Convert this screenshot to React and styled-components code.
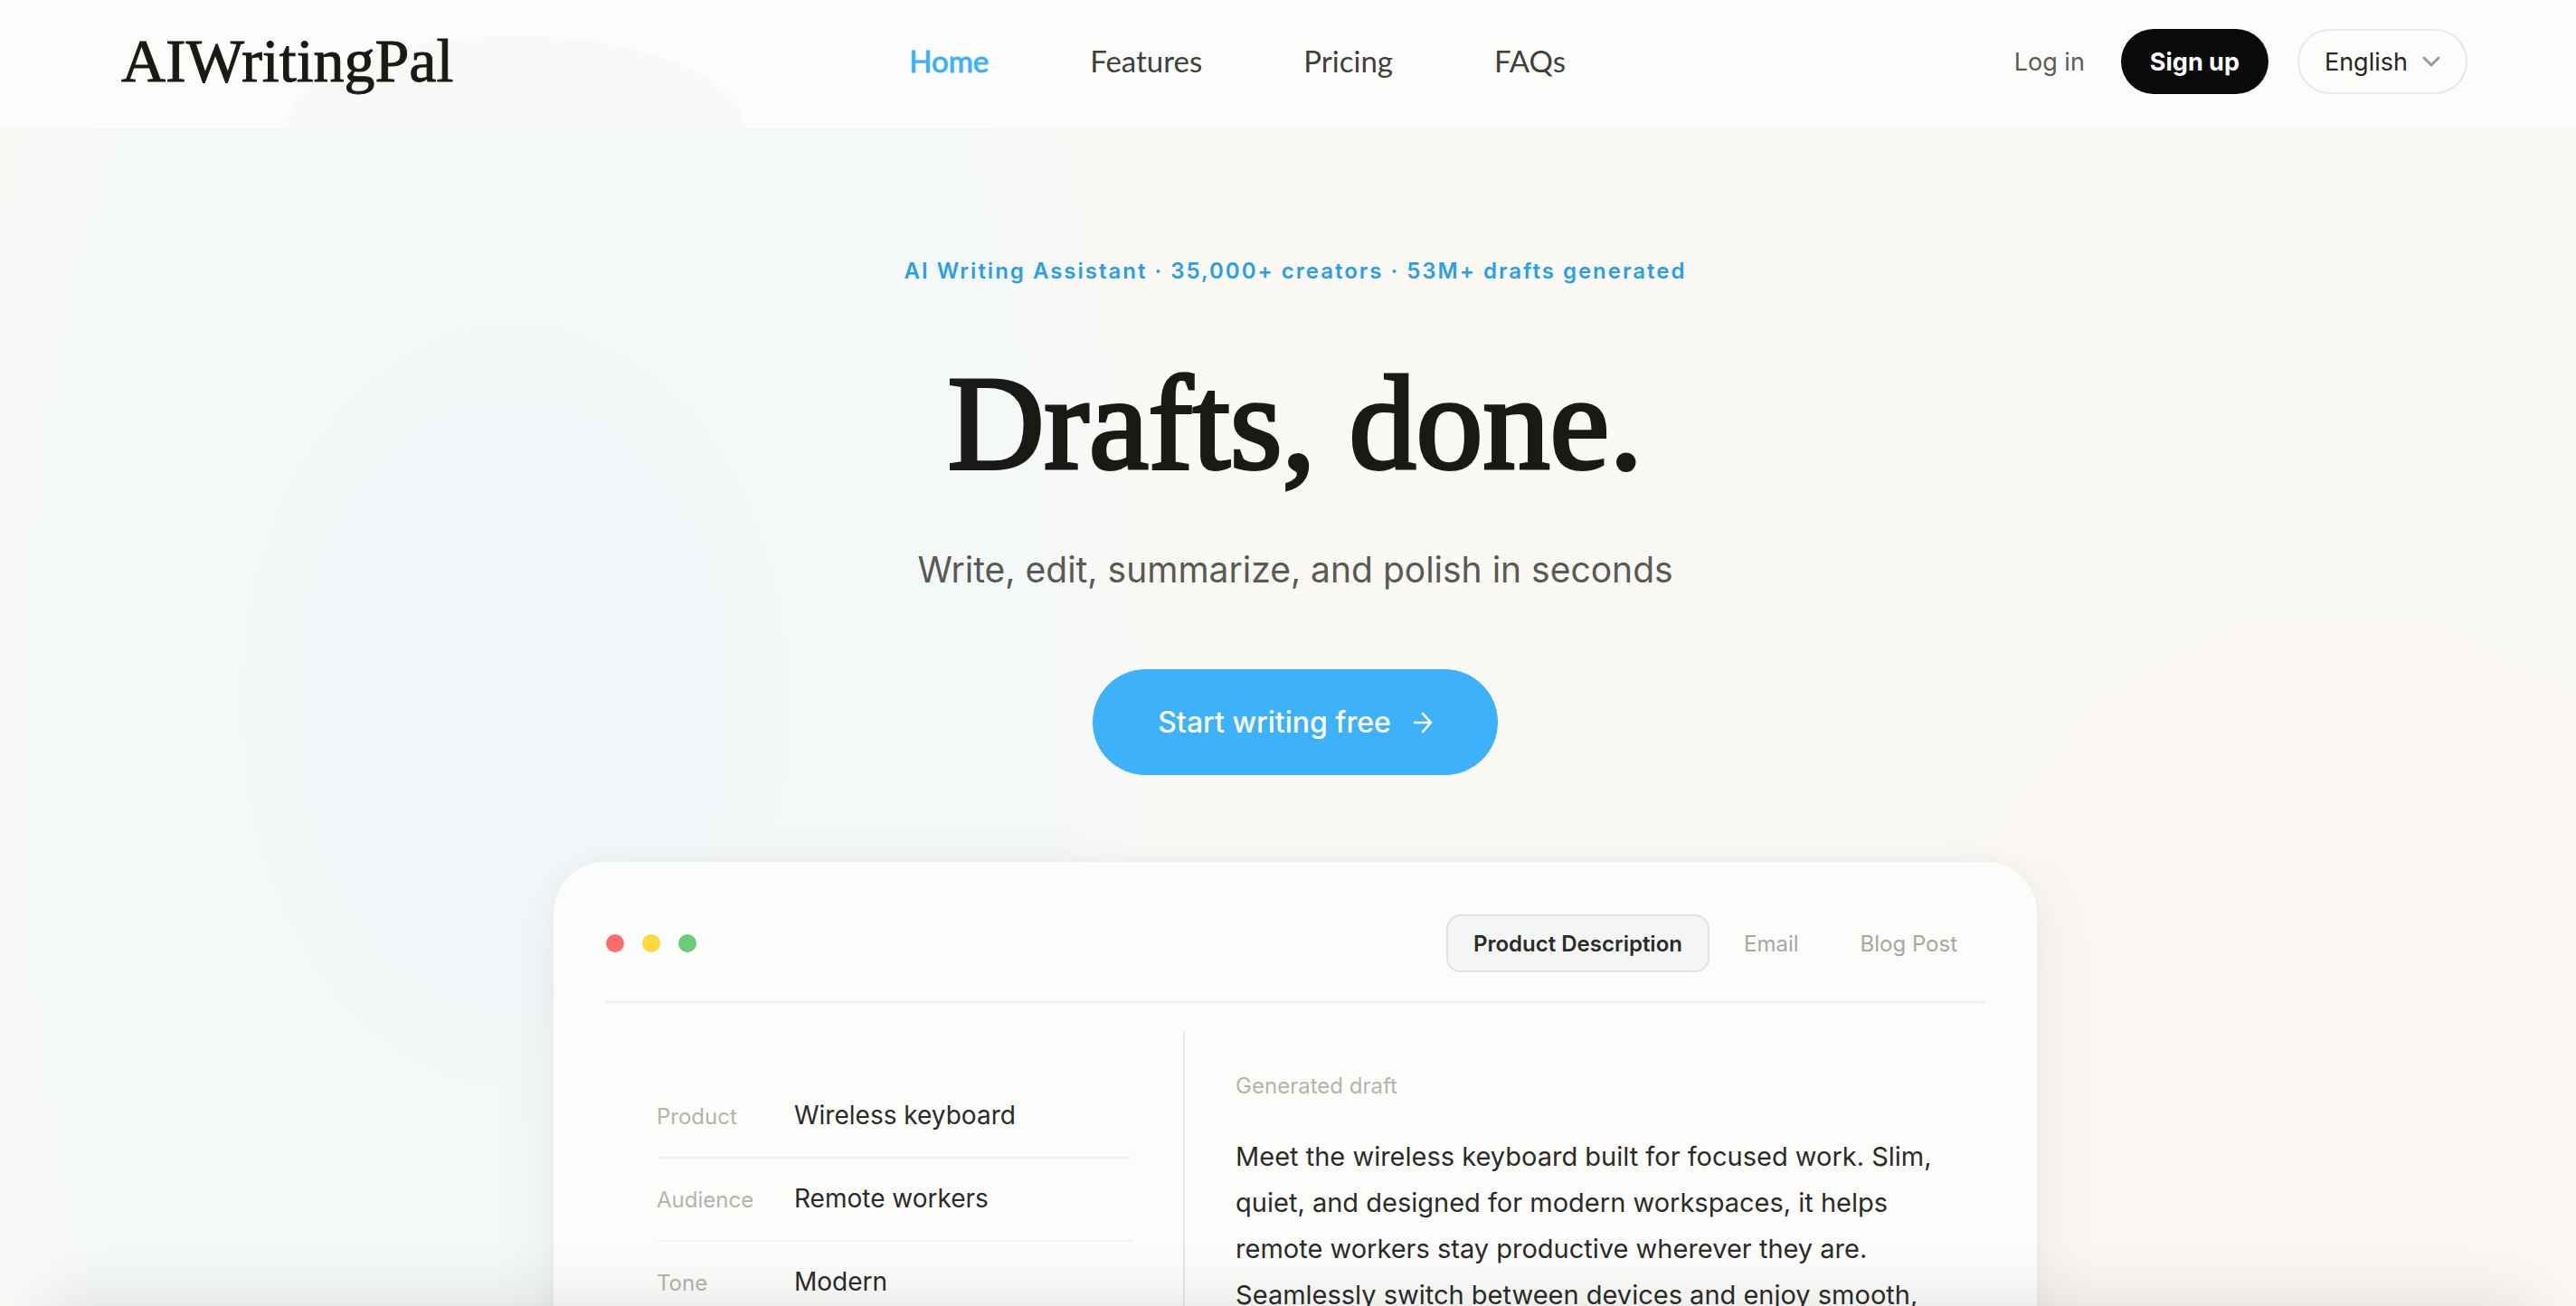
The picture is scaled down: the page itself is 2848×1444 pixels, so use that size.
import { useState } from "react";
import styled, { createGlobalStyle } from "styled-components";

const tabs = ["Product Description", "Email", "Blog Post"];

const fields = [
  { label: "Product", value: "Wireless keyboard" },
  { label: "Audience", value: "Remote workers" },
  { label: "Tone", value: "Modern" },
];

const App = () => {
  const [active, setActive] = useState(tabs[0]);

  return (
    <Page>
      <GlobalStyle />
      <Header>
        <Logo href="#">AIWritingPal</Logo>
        <Nav>
          <NavLink href="#" $active>
            Home
          </NavLink>
          <NavLink href="#features">Features</NavLink>
          <NavLink href="#pricing">Pricing</NavLink>
          <NavLink href="#faqs">FAQs</NavLink>
        </Nav>
        <Actions>
          <Login href="#login">Log in</Login>
          <SignUp type="button">Sign up</SignUp>
          <Language type="button" aria-haspopup="listbox">
            English
            <svg width="20" height="14" viewBox="0 0 20 14" fill="none" stroke="#9b9a97" strokeWidth="3" strokeLinecap="round" strokeLinejoin="round">
              <path d="M2 3l8 8 8-8" />
            </svg>
          </Language>
        </Actions>
      </Header>
      <Hero>
        <Eyebrow>AI Writing Assistant · 35,000+ creators · 53M+ drafts generated</Eyebrow>
        <Title>Drafts, done.</Title>
        <Subtitle>Write, edit, summarize, and polish in seconds</Subtitle>
        <Cta type="button">
          Start writing free
          <svg width="22" height="24" viewBox="0 0 22 24" fill="none" stroke="currentColor" strokeWidth="2.6" strokeLinecap="round" strokeLinejoin="round">
            <path d="M2 12h18M11 2l9 10-9 10" />
          </svg>
        </Cta>
        <Card>
          <CardTop>
            <Dots>
              <Dot $color="#ff6b6b" />
              <Dot $color="#ffd93d" />
              <Dot $color="#6bcb77" />
            </Dots>
            <Tabs>
              {tabs.map((tab) => (
                <Tab key={tab} type="button" $active={tab === active} onClick={() => setActive(tab)}>
                  {tab}
                </Tab>
              ))}
            </Tabs>
          </CardTop>
          <Columns>
            <Fields>
              {fields.map((field) => (
                <Field key={field.label}>
                  <dt>{field.label}</dt>
                  <dd>{field.value}</dd>
                </Field>
              ))}
            </Fields>
            <Draft>
              <DraftLabel>Generated draft</DraftLabel>
              <DraftText>
                Meet the wireless keyboard built for focused work. Slim,
                <br />
                quiet, and designed for modern workspaces, it helps
                <br />
                remote workers stay productive wherever they are.
                <br />
                Seamlessly switch between devices and enjoy smooth,
              </DraftText>
            </Draft>
          </Columns>
        </Card>
      </Hero>
      <NextSection />
    </Page>
  );
};

const GlobalStyle = createGlobalStyle`
  * {
    box-sizing: border-box;
  }
  body {
    margin: 0;
    font-family: Inter, "Open Sans", sans-serif;
    color: #2b2b29;
  }
  button {
    font-family: inherit;
    cursor: pointer;
  }
  a {
    text-decoration: none;
  }
`;

const Page = styled.div`
  position: relative;
  height: 100vh;
  overflow: hidden;
  background:
    radial-gradient(ellipse 13% 36% at 20% 54%, #f2f7f9 50%, #f2f7f900 100%),
    radial-gradient(ellipse 24% 100% at 21% 58%, #f5f8f8 82%, #f5f8f800 100%),
    radial-gradient(ellipse 21% 60% at 91% 100%, #faf6f3 75%, #faf6f300 100%),
    #faf9f6;
`;

const Header = styled.header`
  display: flex;
  align-items: center;
  justify-content: space-between;
  height: 142px;
  padding: 0 120px 6px 134px;
  background:
    radial-gradient(ellipse 256px 104px at 20% 100%, #fbf9f7 98%, #fbf9f700 100%),
    #fcfdfb;
`;

const Logo = styled.a`
  padding-bottom: 2px;
  font-family: "Liberation Serif", serif;
  font-size: 68px;
  line-height: 80px;
  color: #1a1916;
  -webkit-text-stroke: 1px #1a1916;
`;

const Nav = styled.nav`
  display: flex;
  gap: 112px;
  padding: 0 0 2px 8px;
`;

const NavLink = styled.a`
  font-family: Lato, sans-serif;
  font-size: 33px;
  line-height: 40px;
  color: ${({ $active }) => ($active ? "#3db2fa" : "#3f3f3c")};
  -webkit-text-stroke: ${({ $active }) => ($active ? "1px" : "0")};
`;

const Actions = styled.div`
  display: flex;
  align-items: center;
  font-size: 27px;
`;

const Login = styled.a`
  margin-right: 40px;
  color: #5c5b58;
`;

const SignUp = styled.button`
  height: 72px;
  margin-right: 32px;
  padding: 0 32px;
  border: 0;
  border-radius: 36px;
  background: #0a0a0a;
  color: #ffffff;
  font-size: 27px;
  font-weight: 700;
`;

const Language = styled.button`
  display: flex;
  align-items: center;
  gap: 16px;
  height: 72px;
  padding: 0 28px;
  border: 2px solid #e8e8e6;
  border-radius: 36px;
  background: transparent;
  color: #2a2622;
  font-size: 27px;
`;

const Hero = styled.main`
  display: flex;
  flex-direction: column;
  align-items: center;
  padding: 138px 0 0 16px;
  text-align: center;
`;

const Eyebrow = styled.p`
  margin: 0;
  font-size: 24px;
  font-weight: 600;
  line-height: 40px;
  letter-spacing: 2px;
  color: #2b9ee8;
`;

const Title = styled.h1`
  margin: 64px 0 0;
  font-family: "Liberation Serif", serif;
  font-size: 148px;
  font-weight: 400;
  line-height: 168px;
  color: #1a1916;
  -webkit-text-stroke: 4px #1a1916;
`;

const Subtitle = styled.p`
  margin: 48px 0 0;
  font-size: 39px;
  line-height: 60px;
  color: #5a5954;
`;

const Cta = styled.button`
  display: flex;
  align-items: center;
  gap: 24px;
  height: 117px;
  margin-top: 80px;
  padding: 0 72px;
  border: 0;
  border-radius: 60px;
  background: #3db2fa;
  color: #ffffff;
  font-size: 32px;
  font-weight: 500;
`;

const Card = styled.section`
  width: 100%;
  max-width: 1640px;
  height: 700px;
  margin-top: 96px;
  padding: 58px;
  border-radius: 56px;
  background: #fcfdfb;
  box-shadow: 0 20px 80px rgba(30, 30, 30, 0.06), 0 0 24px rgba(30, 60, 80, 0.03);
  text-align: left;
`;

const CardTop = styled.div`
  display: flex;
  align-items: center;
  justify-content: space-between;
  padding-bottom: 32px;
  border-bottom: 2px solid #efebe9;
`;

const Dots = styled.div`
  display: flex;
  gap: 20px;
`;

const Dot = styled.span`
  width: 20px;
  height: 20px;
  border-radius: 50%;
  background: ${({ $color }) => $color};
`;

const Tabs = styled.div`
  display: flex;
  gap: 8px;
`;

const Tab = styled.button`
  height: 64px;
  padding: 0 28px;
  border: 2px solid ${({ $active }) => ($active ? "#e3e1dc" : "transparent")};
  border-radius: 16px;
  background: ${({ $active }) => ($active ? "#f4f6f6" : "transparent")};
  color: ${({ $active }) => ($active ? "#2b2b29" : "#a8a6a0")};
  font-size: 24px;
  font-weight: ${({ $active }) => ($active ? 600 : 400)};
`;

const Columns = styled.div`
  display: grid;
  grid-template-columns: 21fr 29fr;
  margin-top: 32px;
`;

const Fields = styled.dl`
  height: 420px;
  margin: 0;
  padding: 48px 56px;
  border-right: 2px solid #e8e8e6;
`;

const Field = styled.div`
  display: grid;
  grid-template-columns: 152px 1fr;
  align-items: baseline;
  height: 92px;
  padding-top: 24px;
  border-bottom: 2px solid #f4f4f2;
  line-height: 40px;
  dt {
    font-size: 24px;
    color: #b5b3ac;
  }
  dd {
    margin: 0;
    font-size: 28px;
  }
`;

const Draft = styled.div`
  padding: 44px 0 0 56px;
`;

const DraftLabel = styled.p`
  margin: 0;
  font-size: 24px;
  line-height: 32px;
  color: #b5b3ac;
`;

const DraftText = styled.p`
  margin: 36px 0 0;
  font-size: 29px;
  line-height: 51px;
  white-space: nowrap;
`;

/* top edge of the section that follows, only its shadow reaches the hero */
const NextSection = styled.div`
  position: absolute;
  top: 100%;
  left: 32px;
  right: 32px;
  height: 200px;
  border-radius: 64px;
  box-shadow: 0 -8px 64px rgba(30, 25, 20, 0.1);
`;

export default App;
